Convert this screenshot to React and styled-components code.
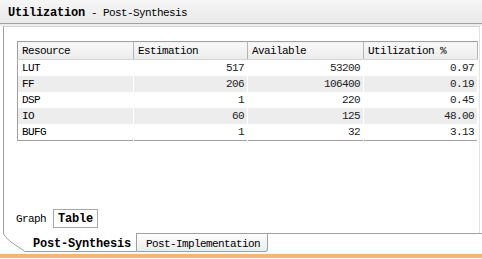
import React from 'react';
import styled, { createGlobalStyle } from 'styled-components';

const rows = [
    { name: 'LUT', est: 517, avail: 53200, util: '0.97' },
    { name: 'FF', est: 206, avail: 106400, util: '0.19' },
    { name: 'DSP', est: 1, avail: 220, util: '0.45' },
    { name: 'IO', est: 60, avail: 125, util: '48.00' },
    { name: 'BUFG', est: 1, avail: 32, util: '3.13' },
];

const App = () => {
    return (
        <>
            <GlobalStyle />
            <Window>
                <TitleBar>
                    <TitleStrong>Utilization</TitleStrong>
                    <TitleRest> - Post-Synthesis</TitleRest>
                </TitleBar>
                <Band />
                <Panel>
                    <Table>
                        <colgroup>
                            <col style={{ width: 116 }} />
                            <col style={{ width: 114 }} />
                            <col style={{ width: 116 }} />
                            <col style={{ width: 114 }} />
                        </colgroup>
                        <thead>
                            <tr>
                                <Th>Resource</Th>
                                <Th>Estimation</Th>
                                <Th>Available</Th>
                                <Th>Utilization %</Th>
                            </tr>
                        </thead>
                        <tbody>
                            {rows.map((r, i) => (
                                <Row key={r.name} $alt={i % 2 === 1}>
                                    <Td>{r.name}</Td>
                                    <Td $num>{r.est}</Td>
                                    <Td $num>{r.avail}</Td>
                                    <Td $num>{r.util}</Td>
                                </Row>
                            ))}
                        </tbody>
                    </Table>
                    <Spacer />
                    <ViewSwitch>
                        <ViewButton>Graph</ViewButton>
                        <ViewButton $active>Table</ViewButton>
                    </ViewSwitch>
                </Panel>
                <TabBar>
                    <ActiveTab>
                        <TabOutline width="134" height="19" viewBox="0 0 134 19">
                            <path d="M0.5 0 L0.5 1 Q2 4 8 9 L22 18.5 L133.5 18.5 L133.5 0" fill="#fff" stroke="#a0a0a0" />
                        </TabOutline>
                        <TabLabel $bold>Post-Synthesis</TabLabel>
                    </ActiveTab>
                    <Tab>
                        <TabLabel>Post-Implementation</TabLabel>
                    </Tab>
                    <TabFill />
                </TabBar>
                <Gap />
                <Footer />
            </Window>
        </>
    );
};

const GlobalStyle = createGlobalStyle`
    html, body {
        margin: 0;
        padding: 0;
        background: #ffffff;
        overflow: hidden;
    }
`;

const Window = styled.div`
    width: 482px;
    height: 259px;
    display: flex;
    flex-direction: column;
    font-family: "Liberation Mono", monospace;
    font-size: 11px;
    letter-spacing: -0.6px;
    color: #000;
    background: #fff;
`;

const TitleBar = styled.div`
    height: 24px;
    display: flex;
    align-items: center;
    padding: 2px 0 0 8px;
    box-sizing: border-box;
    background: linear-gradient(#f6f6f6, #e9e9e9);
    border-bottom: 1px solid #a0a0a0;
    white-space: pre;
`;

const TitleStrong = styled.span`
    font-weight: bold;
    font-size: 12px;
    letter-spacing: -0.2px;
`;

const TitleRest = styled.span`
    font-size: 11px;
`;

const Band = styled.div`
    height: 2px;
    background: #ececec;
`;

const Panel = styled.div`
    height: 207px;
    box-sizing: border-box;
    margin-left: 3px;
    margin-right: 2px;
    border-top: 1px solid #d6d6d6;
    border-left: 1px solid #a0a0a0;
    border-right: 1px solid #e2e2e2;
    padding: 14px 0 5px 13px;
    display: flex;
    flex-direction: column;
`;

const Table = styled.table`
    width: 460px;
    border-collapse: collapse;
    table-layout: fixed;
    border: 1px solid #a0a0a0;
`;

const Th = styled.th`
    height: 17px;
    padding: 0 4px;
    text-align: left;
    font-weight: normal;
    background: linear-gradient(#f8f8f8, #ececec);
    border-right: 1px solid #b4b4b4;
    border-bottom: 1px solid #d4d4d4;
    white-space: nowrap;
`;

const Row = styled.tr`
    background: ${p => (p.$alt ? '#ededed' : '#ffffff')};
`;

const Td = styled.td`
    height: 16px;
    padding: 0 ${p => (p.$num ? '3px' : '4px')};
    text-align: ${p => (p.$num ? 'right' : 'left')};
    border-right: 1px solid #fff;
    color: ${p => (p.$num ? '#222' : '#000')};
    white-space: nowrap;
`;

const Spacer = styled.div`
    flex: 1;
`;

const ViewSwitch = styled.div`
    display: flex;
    align-items: center;
    gap: 2px;
    margin-left: -6px;
`;

const ViewButton = styled.div`
    height: 19px;
    box-sizing: border-box;
    padding: 0 4px;
    display: flex;
    align-items: center;
    border: 1px solid ${p => (p.$active ? '#a8a8a8' : 'transparent')};
    background: ${p => (p.$active ? '#fff' : 'transparent')};
    font-weight: ${p => (p.$active ? 'bold' : 'normal')};
    font-size: ${p => (p.$active ? '12px' : '11px')};
    letter-spacing: ${p => (p.$active ? '-0.2px' : '-0.6px')};
`;

const TabBar = styled.div`
    height: 19px;
    display: flex;
    padding-left: 3px;
`;

const ActiveTab = styled.div`
    position: relative;
    width: 134px;
    display: flex;
    align-items: center;
    padding: 3px 0 0 30px;
    box-sizing: border-box;
`;

const TabOutline = styled.svg`
    position: absolute;
    left: 0;
    top: 0;
`;

const TabLabel = styled.span`
    position: relative;
    font-weight: ${p => (p.$bold ? 'bold' : 'normal')};
    font-size: ${p => (p.$bold ? '12px' : '11px')};
    letter-spacing: ${p => (p.$bold ? '-0.2px' : '-0.6px')};
`;

const Tab = styled.div`
    width: 131px;
    box-sizing: border-box;
    display: flex;
    align-items: center;
    padding: 2px 0 0 9px;
    border: 1px solid #a0a0a0;
    border-left: none;
    border-radius: 0 0 3px 0;
    background: linear-gradient(#fdfdfd, #ececec);
`;

const TabFill = styled.div`
    flex: 1;
    border-top: 1px solid #a0a0a0;
`;

const Gap = styled.div`
    height: 2px;
    background: #fafafa;
`;

const Footer = styled.div`
    height: 4px;
    background: #f3b575;
`;

export default App;
